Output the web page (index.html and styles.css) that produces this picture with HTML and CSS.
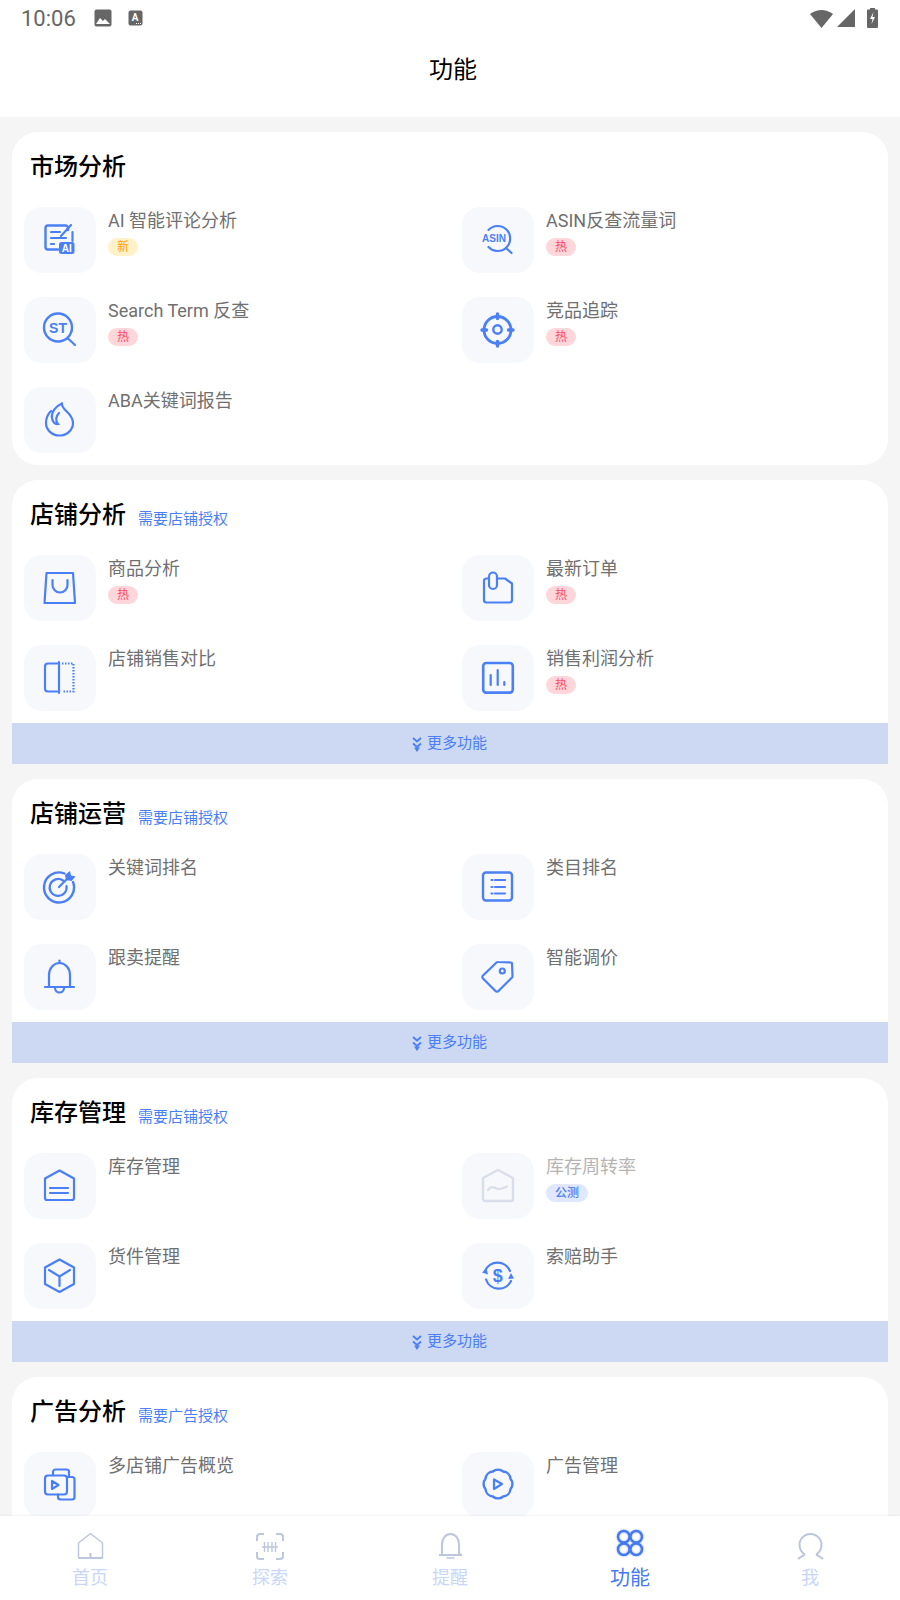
FILE: index.html
```html
<!DOCTYPE html>
<html lang="zh-CN">

<head>
    <meta charset="UTF-8">
    <meta name="viewport" content="width=device-width, initial-scale=1.0">
    <title>功能</title>
    <link rel="stylesheet" href="styles.css">
</head>

<body>
    <div class="status-bar">
        <span class="clock">10:06</span>
        <svg class="status-icon" width="18" height="18" viewBox="0 0 18 18">
            <rect x="0.5" y="0.5" width="17" height="17" rx="2" fill="#666"/>
            <path d="M2 15l4-6 3 3 2-2 5 5z" fill="#fff"/>
        </svg>
        <svg class="status-icon status-a" width="15" height="16" viewBox="0 0 15 16">
            <rect x="0.5" y="0.5" width="14" height="15" rx="2" fill="#666"/>
            <text x="7" y="10.5" class="status-letter">A</text>
            <path d="M8 13.5h1M10 13.5h1M12 13.5h1" stroke="#fff" stroke-width="1"/>
        </svg>
        <div class="status-right">
            <svg width="23" height="19" viewBox="0 0 23 19"><path d="M0 5Q11.500-3 23 5L11.500 19z" fill="#666"/></svg>
            <svg width="18" height="18" viewBox="0 0 18 18"><path d="M18 0V18H0z" fill="#666"/></svg>
            <svg class="battery" width="11" height="20" viewBox="0 0 11 20">
                <path d="M3 0h5v1.500h2a1 1 0 0 1 1 1V19a1 1 0 0 1-1 1H1a1 1 0 0 1-1-1V2.500a1 1 0 0 1 1-1h2z" fill="#666"/>
                <path d="M6.500 4L3 11h2.500L4.500 16 8 9H5.500z" fill="#fff"/>
            </svg>
        </div>
    </div>

    <header class="title-bar">功能</header>

    <main class="content">
        <!-- 市场分析 -->
        <section class="card">
            <div class="card-head"><h2>市场分析</h2></div>
            <div class="grid">
                <div class="item">
                    <div class="tile">
                        <svg class="ico" viewBox="0 0 36 36">
                            <path d="M26 8V6a2.500 2.500 0 0 0-2.500-2.500H6A2.500 2.500 0 0 0 3.500 6v19A2.500 2.500 0 0 0 6 27.500h10" stroke-width="2.400"/>
                            <path d="M19 14l10-11M9 10h9M9 16h15M9 22h3"/>
                            <path d="M30.500 10v9"/>
                            <rect x="17" y="20" width="15.500" height="12" rx="2.500" class="solid"/>
                            <text x="24.800" y="30" class="ico-ai">AI</text>
                        </svg>
                    </div>
                    <div class="info">
                        <div class="name">AI 智能评论分析</div>
                        <span class="badge new">新</span>
                    </div>
                </div>
                <div class="item">
                    <div class="tile">
                        <svg class="ico" viewBox="0 0 36 36">
                            <path d="M8.500 8A12.500 12.500 0 1 1 8.500 25"/>
                            <path d="M26 26l5.500 5"/>
                            <text x="14" y="20" class="ico-asin">ASIN</text>
                        </svg>
                    </div>
                    <div class="info">
                        <div class="name">ASIN反查流量词</div>
                        <span class="badge hot">热</span>
                    </div>
                </div>
                <div class="item">
                    <div class="tile">
                        <svg class="ico" viewBox="0 0 36 36">
                            <circle cx="16" cy="15.500" r="14" stroke-width="2.400"/>
                            <path d="M26 26.500l7 6.500"/>
                            <text x="16" y="20.500" class="ico-st">ST</text>
                        </svg>
                    </div>
                    <div class="info">
                        <div class="name">Search Term 反查</div>
                        <span class="badge hot">热</span>
                    </div>
                </div>
                <div class="item">
                    <div class="tile">
                        <svg class="ico" viewBox="0 0 36 36">
                            <circle cx="17.500" cy="18" r="13.500" stroke-width="2.800"/>
                            <circle cx="17.500" cy="17.500" r="4.200" stroke-width="2.400"/>
                            <path d="M17.500 2v4.500M17.500 29.500V34M2 18h4.500M28.500 18H33" stroke-width="3.400"/>
                        </svg>
                    </div>
                    <div class="info">
                        <div class="name">竞品追踪</div>
                        <span class="badge hot">热</span>
                    </div>
                </div>
                <div class="item">
                    <div class="tile">
                        <svg class="ico" viewBox="0 0 36 36">
                            <path d="M20 1.500C19 8 31 11 31 21A13.500 12.500 0 0 1 4 21C4 16 6 12 9 9"/>
                            <path d="M20 1.500C14 4 9 10 10 16C10.500 20 13 22.500 16 22C13 19 14 14 17 11"/>
                        </svg>
                    </div>
                    <div class="info">
                        <div class="name">ABA关键词报告</div>
                    </div>
                </div>
            </div>
        </section>

        <!-- 店铺分析 -->
        <section class="card">
            <div class="card-head"><h2>店铺分析</h2><span class="auth">需要店铺授权</span></div>
            <div class="grid">
                <div class="item">
                    <div class="tile">
                        <svg class="ico" viewBox="0 0 36 36">
                            <path d="M4.500 3H31L33 33H2.500z" stroke-linejoin="round"/>
                            <path d="M10.500 10v5a7.500 7.500 0 0 0 15 0v-5"/>
                        </svg>
                    </div>
                    <div class="info">
                        <div class="name">商品分析</div>
                        <span class="badge hot">热</span>
                    </div>
                </div>
                <div class="item">
                    <div class="tile">
                        <svg class="ico" viewBox="0 0 36 36">
                            <path d="M9 8.500H6.500A2.500 2.500 0 0 0 4 11v19a2.500 2.500 0 0 0 2.500 2.500h23a2.500 2.500 0 0 0 2.500-2.500V13.500L25 8.500H17" stroke-linejoin="round"/>
                            <path d="M17 8.500V6.500a4 4 0 0 0-8 0V15a4 4 0 0 0 8 0V8.500"/>
                        </svg>
                    </div>
                    <div class="info">
                        <div class="name">最新订单</div>
                        <span class="badge hot">热</span>
                    </div>
                </div>
                <div class="item">
                    <div class="tile">
                        <svg class="ico" viewBox="0 0 36 36">
                            <path d="M15 3.500H6a3 3 0 0 0-3 3v22a3 3 0 0 0 3 3h9"/>
                            <path d="M17 2v31"/>
                            <path d="M20 3.500H31.500V31.500H20" stroke-dasharray="1.500 1.500" stroke-linecap="butt"/>
                        </svg>
                    </div>
                    <div class="info">
                        <div class="name">店铺销售对比</div>
                    </div>
                </div>
                <div class="item">
                    <div class="tile">
                        <svg class="ico" viewBox="0 0 36 36">
                            <rect x="3.200" y="3" width="29.600" height="29.600" rx="3" stroke-width="2.600"/>
                            <path d="M10.700 15v10M17.700 10v15M24.300 22v3"/>
                        </svg>
                    </div>
                    <div class="info">
                        <div class="name">销售利润分析</div>
                        <span class="badge hot">热</span>
                    </div>
                </div>
            </div>
            <div class="more">
                <svg class="chevrons" width="10" height="15" viewBox="0 0 10 15">
                    <path d="M1 1l4 3.500L9 1M1 6.500l4 3.500 4-3.500" fill="none" stroke="#4a7ff5" stroke-width="1.800"/>
                    <path d="M2 10.500h6L5 15z" fill="#4a7ff5"/>
                </svg>
                <span>更多功能</span>
            </div>
        </section>

        <!-- 店铺运营 -->
        <section class="card">
            <div class="card-head"><h2>店铺运营</h2><span class="auth">需要店铺授权</span></div>
            <div class="grid">
                <div class="item">
                    <div class="tile">
                        <svg class="ico" viewBox="0 0 36 36">
                            <path d="M22.500 4.500A15 15 0 1 0 31 13" stroke-width="2.400"/>
                            <path d="M21 11.500A8.500 8.500 0 1 0 24.500 17"/>
                            <path d="M17 18L27 8"/>
                            <path d="M23 6l5-4 1 4.500 4.500 1-4 4.500-5.500-1z" class="solid"/>
                        </svg>
                    </div>
                    <div class="info">
                        <div class="name">关键词排名</div>
                    </div>
                </div>
                <div class="item">
                    <div class="tile">
                        <svg class="ico" viewBox="0 0 36 36">
                            <rect x="3" y="3.500" width="29" height="28" rx="3" stroke-width="2.400"/>
                            <path d="M15 11h10M15 18h10M15 24.500h10"/>
                            <path d="M11.500 11h1M11.500 18h1M11.500 24.500h1"/>
                        </svg>
                    </div>
                    <div class="info">
                        <div class="name">类目排名</div>
                    </div>
                </div>
                <div class="item">
                    <div class="tile">
                        <svg class="ico" viewBox="0 0 36 36">
                            <path d="M3 28h29"/>
                            <path d="M7 28V16a10.500 12 0 0 1 21 0v12"/>
                            <path d="M17.500 1.500v2"/>
                            <path d="M13 29a4.500 4.500 0 0 0 9 0"/>
                        </svg>
                    </div>
                    <div class="info">
                        <div class="name">跟卖提醒</div>
                    </div>
                </div>
                <div class="item">
                    <div class="tile">
                        <svg class="ico" viewBox="0 0 36 36">
                            <path d="M18 3l13 .5a1 1 0 0 1 1 1l.5 12.500a2 2 0 0 1-.5 1.500L18.500 32a2 2 0 0 1-3 0L3 19.500a2 2 0 0 1 0-3L16.500 3.500a2 2 0 0 1 1.500-.5z" stroke-linejoin="round"/>
                            <circle cx="22.300" cy="12" r="2.500"/>
                        </svg>
                    </div>
                    <div class="info">
                        <div class="name">智能调价</div>
                    </div>
                </div>
            </div>
            <div class="more">
                <svg class="chevrons" width="10" height="15" viewBox="0 0 10 15">
                    <path d="M1 1l4 3.500L9 1M1 6.500l4 3.500 4-3.500" fill="none" stroke="#4a7ff5" stroke-width="1.800"/>
                    <path d="M2 10.500h6L5 15z" fill="#4a7ff5"/>
                </svg>
                <span>更多功能</span>
            </div>
        </section>

        <!-- 库存管理 -->
        <section class="card">
            <div class="card-head"><h2>库存管理</h2><span class="auth">需要店铺授权</span></div>
            <div class="grid">
                <div class="item">
                    <div class="tile">
                        <svg class="ico" viewBox="0 0 36 36">
                            <path d="M17.500 2.500L32 10.500V30a2 2 0 0 1-2 2H5a2 2 0 0 1-2-2V10.500z" stroke-linejoin="round"/>
                            <path d="M8 20h18M8 25h18"/>
                        </svg>
                    </div>
                    <div class="info">
                        <div class="name">库存管理</div>
                    </div>
                </div>
                <div class="item">
                    <div class="tile">
                        <svg class="ico off" viewBox="0 0 36 36">
                            <path d="M18 2L33 10V31a2 2 0 0 1-2 2H5a2 2 0 0 1-2-2V10z" stroke-width="2.400" stroke-linejoin="round"/>
                            <path d="M8 22q3-4 6-2.500t5 1.500q3 0 8-2.500"/>
                        </svg>
                    </div>
                    <div class="info">
                        <div class="name name-off">库存周转率</div>
                        <span class="badge beta">公测</span>
                    </div>
                </div>
                <div class="item">
                    <div class="tile">
                        <svg class="ico" viewBox="0 0 36 36">
                            <path d="M17.500 1.500L32 9.500V26L17.500 34 3 26V9.500z" stroke-linejoin="round"/>
                            <path d="M7 12l10.500 6.500L28 12M17.500 18.500V28"/>
                        </svg>
                    </div>
                    <div class="info">
                        <div class="name">货件管理</div>
                    </div>
                </div>
                <div class="item">
                    <div class="tile">
                        <svg class="ico" viewBox="0 0 36 36">
                            <path d="M5 13A13.500 13.500 0 0 1 30 13"/>
                            <path d="M31 23A13.500 13.500 0 0 1 6 21.500"/>
                            <path d="M2 14.500l4.500-4 1.500 6z" class="solid"/>
                            <path d="M34 20.500l-6 .5 3-6z" class="solid"/>
                            <text x="17.800" y="24" class="ico-dollar">$</text>
                        </svg>
                    </div>
                    <div class="info">
                        <div class="name">索赔助手</div>
                    </div>
                </div>
            </div>
            <div class="more">
                <svg class="chevrons" width="10" height="15" viewBox="0 0 10 15">
                    <path d="M1 1l4 3.500L9 1M1 6.500l4 3.500 4-3.500" fill="none" stroke="#4a7ff5" stroke-width="1.800"/>
                    <path d="M2 10.500h6L5 15z" fill="#4a7ff5"/>
                </svg>
                <span>更多功能</span>
            </div>
        </section>

        <!-- 广告分析 -->
        <section class="card">
            <div class="card-head"><h2>广告分析</h2><span class="auth">需要广告授权</span></div>
            <div class="grid">
                <div class="item">
                    <div class="tile">
                        <svg class="ico" viewBox="0 0 36 36">
                            <path d="M11 8V5a2.500 2.500 0 0 1 2.500-2.500h11A2.500 2.500 0 0 1 27 5v5"/>
                            <rect x="3" y="8.500" width="22" height="19" rx="3"/>
                            <path d="M16 27.500V30a2.500 2.500 0 0 0 2.500 2.500H30a2.500 2.500 0 0 0 2.500-2.500V12.500A2.500 2.500 0 0 0 30 10h-5"/>
                            <path d="M10 14v8l6.500-4z" stroke-linejoin="round"/>
                        </svg>
                    </div>
                    <div class="info">
                        <div class="name">多店铺广告概览</div>
                    </div>
                </div>
                <div class="item">
                    <div class="tile">
                        <svg class="ico" viewBox="0 0 36 36">
                            <path d="M12.800 4.500A8 8 0 0 1 23.200 4.500 8 8 0 0 1 30.500 11.800 8 8 0 0 1 30.500 22.200 8 8 0 0 1 23.200 29.500 8 8 0 0 1 12.800 29.500 8 8 0 0 1 5.500 22.200 8 8 0 0 1 5.500 11.800 8 8 0 0 1 12.800 4.500z" stroke-width="2.400"/>
                            <path d="M14 12.500v9.500l8-5z" stroke-linejoin="round"/>
                        </svg>
                    </div>
                    <div class="info">
                        <div class="name">广告管理</div>
                    </div>
                </div>
            </div>
        </section>
    </main>

    <nav class="tabs">
        <div class="tab">
            <svg class="tab-ico" viewBox="0 0 30 30">
                <path d="M15.500 2.500L27.500 12V27H3.500V12z" stroke-linejoin="round" stroke-width="1.500"/>
                <path d="M3.500 27H27.500M15.500 22v5"/>
            </svg>
            <span>首页</span>
        </div>
        <div class="tab">
            <svg class="tab-ico" viewBox="0 0 30 30">
                <path d="M9 3H5a3 3 0 0 0-3 3v4M21 3h4a3 3 0 0 1 3 3v4M9 28H5a3 3 0 0 1-3-3v-4M21 28h4a3 3 0 0 0 3-3v-4"/>
                <path d="M7 16h16M9.500 11v10M13 11v10M17 11v10M20.500 11v10" stroke-width="1.400"/>
            </svg>
            <span>探索</span>
        </div>
        <div class="tab">
            <svg class="tab-ico" viewBox="0 0 30 30">
                <path d="M7 23V13a8.500 10 0 0 1 17 0v8c0 2 1 3 3 3H4"/>
                <path d="M11.500 27h8" stroke-width="1.500"/>
            </svg>
            <span>提醒</span>
        </div>
        <div class="tab tab-on">
            <svg class="tab-ico" viewBox="0 0 30 30">
                <circle cx="8.800" cy="5.700" r="5.800"/>
                <circle cx="21.200" cy="5.700" r="5.800"/>
                <circle cx="8.800" cy="18.300" r="5.800"/>
                <circle cx="21.200" cy="18.300" r="5.800"/>
            </svg>
            <span>功能</span>
        </div>
        <div class="tab">
            <svg class="tab-ico" viewBox="0 0 30 30">
                <path d="M10 23.500A11 11 0 1 1 21 23.500"/>
                <path d="M3 28Q7 25 10 23.500M28 28Q24 25 21 23.500"/>
            </svg>
            <span>我</span>
        </div>
    </nav>
</body>

</html>
```

FILE: styles.css
```css
* {
    box-sizing: border-box;
}

body {
    margin: 0;
    width: 900px;
    height: 1600px;
    display: flex;
    flex-direction: column;
    overflow: hidden;
    background-color: #fff;
    font-family: Roboto, "Noto Sans CJK SC", sans-serif;
}

/* status bar */
.status-bar {
    height: 36px;
    display: flex;
    align-items: center;
    padding: 0 22px 0 21px;
    color: #666;
}

.clock {
    font-size: 22px;
    width: 73px;
}

.status-a {
    margin-left: 16px;
}

.status-letter {
    font-size: 10px;
    font-weight: 700;
    fill: #fff;
    text-anchor: middle;
}

.status-right {
    margin-left: auto;
    display: flex;
    align-items: center;
    gap: 4px;
}

.battery {
    margin-left: 8px;
}

.title-bar {
    height: 81px;
    padding-bottom: 19px;
    display: flex;
    align-items: center;
    justify-content: center;
    padding-left: 6px;
    font-size: 24px;
    color: #000;
}

/* scrolling area */
.content {
    flex: 1;
    min-height: 0;
    overflow: hidden;
    display: flex;
    flex-direction: column;
    gap: 15px;
    padding: 15px 12px 0;
    background-color: #f5f5f5;
}

.card {
    flex-shrink: 0;
    background-color: #fff;
    border-radius: 26px 26px 0 0;
}

.card:first-child {
    border-radius: 26px;
    padding-bottom: 12px;
}

.card-head {
    height: 75px;
    padding: 0 0 11px 18px;
    display: flex;
    align-items: center;
    gap: 12px;
}

.card-head h2 {
    margin: 0;
    font-size: 24px;
    font-weight: 500;
    color: #000;
}

.auth {
    margin-top: 10px;
    font-size: 15px;
    color: #4a7ff5;
}

.grid {
    display: grid;
    grid-template-columns: 438px 438px;
    row-gap: 24px;
    padding-left: 12px;
}

.item {
    display: flex;
    gap: 12px;
}

.tile {
    width: 72px;
    height: 66px;
    flex-shrink: 0;
    display: flex;
    align-items: center;
    justify-content: center;
    border-radius: 18px;
    background-color: #f6f8fb;
}

.ico {
    width: 36px;
    height: 36px;
    fill: none;
    stroke: #4a7ff5;
    stroke-width: 2.200;
    stroke-linecap: round;
}

.ico .solid {
    fill: #4a7ff5;
    stroke: none;
}

.ico.off {
    stroke: #dadeea;
}

.ico text {
    stroke: none;
    fill: #4a7ff5;
    text-anchor: middle;
    font-family: "Liberation Sans", sans-serif;
    font-weight: 700;
}

.ico .ico-ai {
    fill: #fff;
    font-size: 10px;
}

.ico .ico-asin {
    font-size: 10px;
}

.ico .ico-st {
    font-size: 14px;
}

.ico .ico-dollar {
    font-size: 18px;
}

.name {
    font-size: 18px;
    line-height: 27px;
    color: #707070;
}

.name-off {
    color: #b4b4b4;
}

.badge {
    display: block;
    width: 30px;
    height: 18px;
    margin-top: 4px;
    border-radius: 9px;
    font-size: 12px;
    line-height: 18px;
    text-align: center;
}

.new {
    background-color: #fff1c9;
    color: #ffa200;
}

.hot {
    background-color: #ffd6da;
    color: #ff4d5e;
}

.beta {
    width: 42px;
    background-color: #e0e8ff;
    color: #4a7ff5;
    font-weight: 500;
}

.more {
    height: 41px;
    margin-top: 12px;
    display: flex;
    align-items: center;
    justify-content: center;
    gap: 5px;
    padding: 0 1px 4px 0;
    background-color: #cdd8f2;
    font-size: 15px;
    color: #4a7ff5;
}

.chevrons {
    margin-top: 6px;
}

/* bottom tabs */
.tabs {
    height: 84px;
    flex-shrink: 0;
    display: flex;
    background-color: #fff;
    box-shadow: 0 -1px 2px rgba(0, 0, 0, 0.05);
    position: relative;
}

.tab {
    width: 180px;
    padding-top: 15px;
    display: flex;
    flex-direction: column;
    align-items: center;
    gap: 5px;
    font-size: 18px;
    line-height: 24px;
    color: #c8d6f8;
}

.tab-ico {
    width: 30px;
    height: 30px;
    fill: none;
    stroke: #bcc6dc;
    stroke-width: 2;
    overflow: visible;
}

.tab-on {
    font-size: 20px;
    color: #4479f2;
}

.tab-on .tab-ico {
    stroke: #4479f2;
    stroke-width: 2.500;
    filter: drop-shadow(0 0 1px rgba(68, 121, 242, 0.5));
}
```
